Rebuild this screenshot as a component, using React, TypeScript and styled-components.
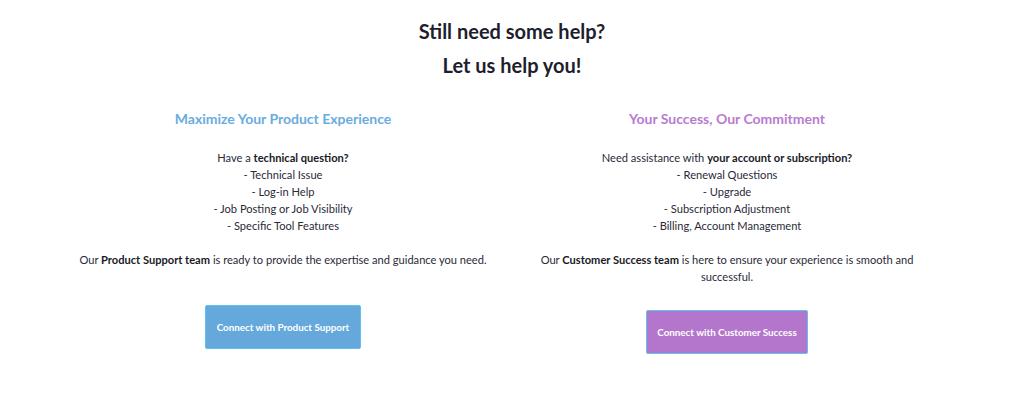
import React from 'react'
import styled, { createGlobalStyle } from 'styled-components'

const GlobalStyle = createGlobalStyle`
  body {
    margin: 0;
    background: #fff;
    font-family: Lato, "Open Sans", sans-serif;
    color: #2a2a38;
  }
`

const Page = styled.div`
  width: 1024px;
  height: 419px;
  padding-top: 14px;
  box-sizing: border-box;
`

const Title = styled.h2`
  margin: 0;
  text-align: center;
  font-size: 20px;
  font-weight: 700;
  line-height: 34px;
  color: #1e1e2d;
`

const Columns = styled.div`
  display: grid;
  grid-template-columns: 444px 444px;
  padding-left: 61px;
  margin-top: 26px;
`

const Column = styled.div`
  display: flex;
  flex-direction: column;
  align-items: center;
  padding: 0 12px;
  text-align: center;
`

const Heading = styled.h3<{ $color: string }>`
  margin: 0;
  font-size: 14px;
  font-weight: 700;
  line-height: 22px;
  color: ${(p) => p.$color};
`

const Body = styled.p<{ $top: number }>`
  margin: ${(p) => p.$top}px 0 0;
  font-size: 11.1px;
  line-height: 17px;
  color: #2a2a38;
  b {
    font-weight: 700;
    color: #1a1a26;
  }
`

const Button = styled.button<{ $bg: string; $top: number; $width: number }>`
  margin-top: ${(p) => p.$top}px;
  width: ${(p) => p.$width}px;
  height: 44px;
  background: ${(p) => p.$bg};
  border: 1px solid #5fc2ec;
  border-radius: 2px;
  color: #fff;
  font-family: Lato, "Open Sans", sans-serif;
  font-size: 9.8px;
  font-weight: 700;
  cursor: pointer;
`

type Section = {
  heading: string
  color: string
  intro: React.ReactNode
  items: string[]
  outro: React.ReactNode
  button: string
  buttonBg: string
  buttonTop: number
  buttonWidth: number
}

const sections: Section[] = [
  {
    heading: 'Maximize Your Product Experience',
    color: '#69ace0',
    intro: (
      <>
        Have a <b>technical question?</b>
      </>
    ),
    items: ['Technical Issue', 'Log-in Help', 'Job Posting or Job Visibility', 'Specific Tool Features'],
    outro: (
      <>
        Our <b>Product Support team</b> is ready to provide the expertise and guidance you need.
      </>
    ),
    button: 'Connect with Product Support',
    buttonBg: '#65a9dc',
    buttonTop: 37,
    buttonWidth: 156,
  },
  {
    heading: 'Your Success, Our Commitment',
    color: '#b87bd0',
    intro: (
      <>
        Need assistance with <b>your account or subscription?</b>
      </>
    ),
    items: ['Renewal Questions', 'Upgrade', 'Subscription Adjustment', 'Billing, Account Management'],
    outro: (
      <>
        Our <b>Customer Success team</b> is here to ensure your experience is smooth and successful.
      </>
    ),
    button: 'Connect with Customer Success',
    buttonBg: '#b376cc',
    buttonTop: 25,
    buttonWidth: 162,
  },
]

export default function App() {
  return (
    <Page>
      <GlobalStyle />
      <Title>Still need some help?</Title>
      <Title>Let us help you!</Title>
      <Columns>
        {sections.map((s) => (
          <Column key={s.heading}>
            <Heading $color={s.color}>{s.heading}</Heading>
            <Body $top={19}>
              {s.intro}
              {s.items.map((it) => (
                <React.Fragment key={it}>
                  <br />- {it}
                </React.Fragment>
              ))}
            </Body>
            <Body $top={17}>{s.outro}</Body>
            <Button $bg={s.buttonBg} $top={s.buttonTop} $width={s.buttonWidth}>
              {s.button}
            </Button>
          </Column>
        ))}
      </Columns>
    </Page>
  )
}
